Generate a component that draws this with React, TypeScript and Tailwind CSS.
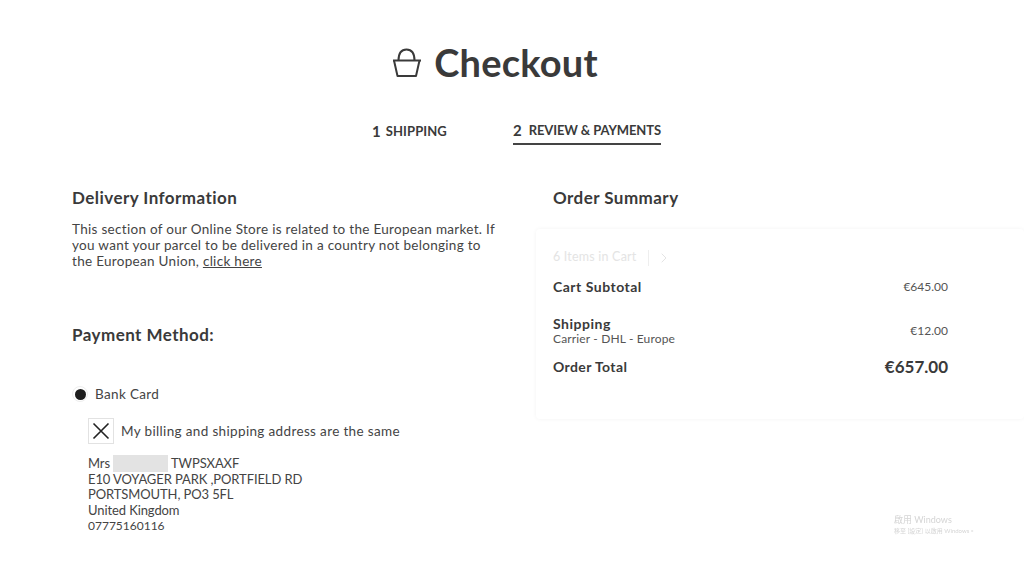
import { ChevronRight } from 'lucide-react';

const font = "font-['Lato','Noto_Sans_CJK_TC',sans-serif]";

function BasketIcon() {
  return (
    <svg className="mt-[2px]" width="30" height="30" viewBox="0 0 30 30" fill="none" stroke="#3a3a3a" strokeWidth="2" strokeLinejoin="round">
      <path d="M1 12.5h28" />
      <path d="M2 12.5l3.5 15.5h18.5l3.5-15.5" />
      <path d="M6.5 12.5C6.5 5 9 1.5 14.5 1.5S22.5 5 22.5 12.5" />
    </svg>
  );
}

function SummaryRow({ label, sub, amount }: { label: string; sub?: string; amount: string }) {
  return (
    <div className="flex items-center justify-between pr-[76px]">
      <div>
        <p className="text-[14px] leading-[15px] font-bold tracking-[0.5px] text-[#3a3a3a]">{label}</p>
        {sub && <p className="text-[12px] leading-[15px] tracking-[0.15px] text-[#555]">{sub}</p>}
      </div>
      <span className="text-[12px] text-[#555]">{amount}</span>
    </div>
  );
}

export default function App() {
  return (
    <div className={`relative h-[576px] w-[1024px] overflow-hidden bg-white ${font}`}>
      <header className="flex items-center justify-center gap-[12px] pt-[40px] pr-[34px]">
        <BasketIcon />
        <h1 className="text-[38px] leading-[44px] font-bold tracking-[0.2px] text-[#3a3a3a]">Checkout</h1>
      </header>

      <nav className="mt-[35px] flex justify-center gap-[66px] pl-[9px]">
        <div className="flex items-center gap-[5px] pb-[1px] text-[#3a3a3a]">
          <span className="text-[15px] font-bold">1</span>
          <span className="text-[13px] font-bold tracking-[0.1px]">SHIPPING</span>
        </div>
        <div className="flex items-center gap-[7px] border-b-2 border-[#444] pb-[1px] text-[#3a3a3a]">
          <span className="text-[15px] font-bold">2</span>
          <span className="text-[13px] font-bold tracking-[-0.1px]">REVIEW &amp; PAYMENTS</span>
        </div>
      </nav>

      <main className="mt-[41px] flex pl-[72px]">
        <section className="w-[425px] shrink-0 text-[#444]">
          <h2 className="text-[17px] leading-[24px] font-bold tracking-[0.45px] text-[#3a3a3a]">Delivery Information</h2>
          <p className="mt-[11px] text-[13.5px] leading-[16px] tracking-[0.3px]">
            This section of our Online Store is related to the European market. If you want your parcel to be delivered in a country not belonging to the European Union, <span className="underline">click here</span>
          </p>

          <h2 className="mt-[54px] text-[17px] leading-[24px] font-bold tracking-[0.45px] text-[#3a3a3a]">Payment Method:</h2>

          <div className="mt-[37px] flex items-center gap-[7px]">
            <span className="mt-[1px] flex h-[16px] w-[16px] items-center justify-center rounded-full border border-[#eee]">
              <span className="h-[11px] w-[11px] rounded-full bg-[#1d1d1d]" />
            </span>
            <span className="text-[13.5px] tracking-[0.35px]">Bank Card</span>
          </div>

          <div className="mt-[14px] ml-[16px] flex items-center gap-[7px]">
            <span className="flex h-[26px] w-[26px] items-center justify-center border border-[#e2e2e2] bg-white">
              <svg width="18" height="18" viewBox="0 0 18 18" stroke="#222" strokeWidth="1.6" fill="none">
                <path d="M1.5 1.5l15 15M16.5 1.5l-15 15" />
              </svg>
            </span>
            <span className="text-[13.5px] tracking-[0.35px]">My billing and shipping address are the same</span>
          </div>

          <address className="mt-[11px] ml-[16px] text-[13px] leading-[15.4px] tracking-[-0.1px] not-italic">
            <div className="flex items-center">
              <span>Mrs</span>
              <span className="mx-[3px] h-[17px] w-[55px] bg-[#e3e3e3]" />
              <span>TWPSXAXF</span>
            </div>
            <div>E10 VOYAGER PARK ,PORTFIELD RD</div>
            <div>PORTSMOUTH, PO3 5FL</div>
            <div>United Kingdom</div>
            <div className="text-[12px] tracking-normal">07775160116</div>
          </address>
        </section>

        <section className="ml-[56px] flex-1">
          <h2 className="text-[17px] leading-[24px] font-bold tracking-[0.45px] text-[#3a3a3a]">Order Summary</h2>
          <div className="-ml-[17px] mt-[19px] h-[190px] rounded-[4px] pl-[17px] pt-[20px] shadow-[0_0_4px_rgba(0,0,0,0.05)]">
            <div className="flex h-[18px] items-center text-[#e4e4e4]">
              <span className="text-[12.5px] tracking-[0.2px]">6 Items in Cart</span>
              <span className="ml-[12px] h-[16px] w-px bg-[#eee]" />
              <ChevronRight size={16} strokeWidth={1.5} className="ml-[7px]" />
            </div>
            <div className="mt-[11px]">
              <SummaryRow label="Cart Subtotal" amount="€645.00" />
            </div>
            <div className="mt-[20px]">
              <SummaryRow label="Shipping" sub="Carrier - DHL - Europe" amount="€12.00" />
            </div>
            <div className="mt-[8px] flex items-center justify-between pr-[76px]">
              <span className="text-[14px] font-bold tracking-[0.4px] text-[#3a3a3a]">Order Total</span>
              <span className="text-[17px] font-bold text-[#3a3a3a]">€657.00</span>
            </div>
          </div>
        </section>
      </main>

      <div className="absolute top-[514px] left-[894px] text-[#d5d5d5] blur-[0.4px]">
        <p className="text-[9px] leading-[12px]">啟用 Windows</p>
        <p className="text-[6px] leading-[9px]">移至 [設定] 以啟用 Windows。</p>
      </div>
    </div>
  );
}
